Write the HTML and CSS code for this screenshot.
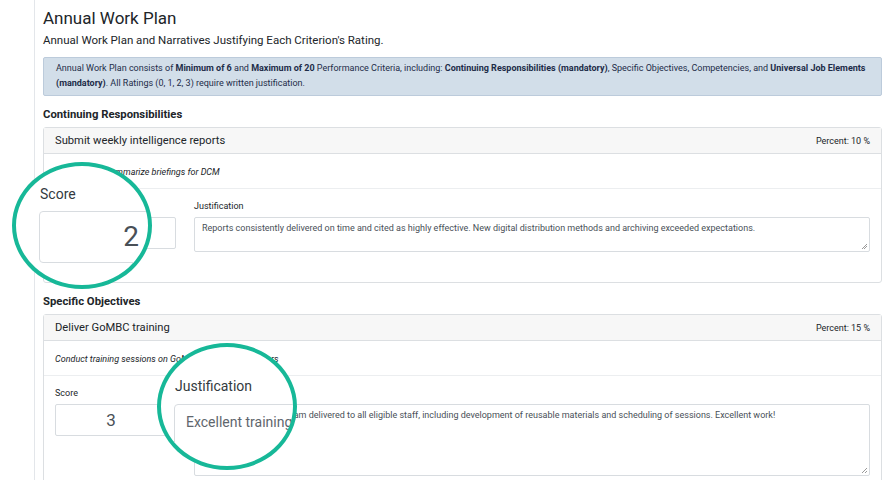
FILE: index.html
```html
<!DOCTYPE html>
<html lang="en">
<head>
    <meta charset="UTF-8">
    <meta name="viewport" content="width=device-width, initial-scale=1.0">
    <title>Annual Work Plan</title>
    <link rel="stylesheet" href="styles.css">
</head>
<body>
    <div class="page">
        <aside class="side"></aside>

        <main class="content">
            <h1 class="title">Annual Work Plan</h1>
            <p class="lead">Annual Work Plan and Narratives Justifying Each Criterion's Rating.</p>

            <div class="alert">
                Annual Work Plan consists of <b>Minimum of 6</b> and <b>Maximum of 20</b> Performance Criteria, including: <b>Continuing Responsibilities (mandatory)</b>, Specific Objectives, Competencies, and <b>Universal Job Elements (mandatory)</b>. All Ratings (0, 1, 2, 3) require written justification.
            </div>

            <h2 class="section">Continuing Responsibilities</h2>
            <div class="card">
                <div class="card-header">
                    <span class="card-title">Submit weekly intelligence reports</span>
                    <span class="percent">Percent: 10 %</span>
                </div>
                <div class="card-desc">Compile and summarize briefings for DCM</div>
                <div class="card-body">
                    <div class="score-col">
                        <label class="field-label">Score</label>
                        <div class="score-box">2</div>
                    </div>
                    <div class="just-col">
                        <label class="field-label">Justification</label>
                        <div class="textarea">Reports consistently delivered on time and cited as highly effective. New digital distribution methods and archiving exceeded expectations.</div>
                    </div>
                </div>
            </div>

            <h2 class="section">Specific Objectives</h2>
            <div class="card">
                <div class="card-header">
                    <span class="card-title">Deliver GoMBC training</span>
                    <span class="percent">Percent: 15 %</span>
                </div>
                <div class="card-desc">Conduct training sessions on GoMBC for new supervisors</div>
                <div class="card-body">
                    <div class="score-col">
                        <label class="field-label">Score</label>
                        <div class="score-box">3</div>
                    </div>
                    <div class="just-col">
                        <label class="field-label">Justification</label>
                        <div class="textarea tall">Excellent training program delivered to all eligible staff, including development of reusable materials and scheduling of sessions. Excellent work!</div>
                    </div>
                </div>
            </div>
        </main>

        <!-- magnifier callouts -->
        <div class="lens lens-score">
            <div class="lens-label">Score</div>
            <div class="lens-box lens-num">2</div>
        </div>
        <div class="lens lens-just">
            <div class="lens-label">Justification</div>
            <div class="lens-box lens-text">Excellent training</div>
        </div>
    </div>
</body>
</html>
```

FILE: styles.css
```css
body {
    margin: 0;
    background-color: #ffffff;
    color: #212529;
    font-family: Roboto, "Liberation Sans", sans-serif;
}
.page {
    position: relative;
    display: flex;
    height: 480px;
    overflow: hidden;
}
.side {
    width: 34px;
    flex-shrink: 0;
    border-right: 1px solid #e3e6ea;
}
.content {
    flex: 1;
    padding: 0 6px 0 8px;
}
.title {
    margin: 8px 0 0;
    font-size: 17px;
    line-height: 20px;
    font-weight: 400;
}
.lead {
    margin: 5px 0 0;
    font-size: 11.5px;
    line-height: 14px;
}
.alert {
    margin-top: 10px;
    padding: 3px 12px 4px;
    background-color: #d2dee9;
    border: 1px solid #bccbdb;
    border-radius: 2px;
    color: #1d2c48;
    font-size: 9px;
    line-height: 15px;
}
.section {
    margin: 12px 0 5px;
    font-size: 11.3px;
    line-height: 14px;
    font-weight: 700;
}
.card {
    border: 1px solid #dcdfe2;
    border-radius: 3px;
}
.card-header {
    display: flex;
    justify-content: space-between;
    align-items: center;
    height: 25px;
    padding: 0 11px;
    background-color: #f7f7f7;
    border-bottom: 1px solid #dcdfe2;
}
.card-title {
    font-size: 11.2px;
}
.percent {
    font-size: 9px;
}
.card-desc {
    padding: 12px 11px 10px;
    font-size: 9px;
    line-height: 12px;
    font-style: italic;
    border-bottom: 1px solid #eceef0;
}
.card-body {
    display: flex;
    gap: 18px;
    padding: 12px 11px 30px;
}
.score-col {
    width: 121px;
    flex-shrink: 0;
}
.just-col {
    flex: 1;
}
.field-label {
    display: block;
    margin-bottom: 6px;
    font-size: 9px;
    line-height: 10px;
}
.score-box {
    height: 30px;
    padding-right: 9px;
    border: 1px solid #d8dce0;
    border-radius: 2px;
    text-align: center;
    font-size: 17px;
    line-height: 30px;
    color: #495057;
}
.textarea {
    position: relative;
    height: 33px;
    padding: 0 7px;
    border: 1px solid #d8dce0;
    border-radius: 2px;
    font-size: 9px;
    line-height: 20px;
    color: #495057;
    box-sizing: content-box;
}
.textarea.tall {
    height: 70px;
}
.textarea::after {
    content: "";
    position: absolute;
    right: 2px;
    bottom: 2px;
    width: 5px;
    height: 5px;
    background: linear-gradient(135deg, transparent 45%, #9a9a9a 45%, #9a9a9a 55%, transparent 55%, transparent 70%, #9a9a9a 70%, #9a9a9a 80%, transparent 80%);
}
.lens {
    position: absolute;
    width: 132px;
    height: 119px;
    border: 4px solid #17b898;
    border-radius: 50%;
    background-color: #ffffff;
    overflow: hidden;
}
.lens-score {
    left: 12px;
    top: 162px;
}
.lens-just {
    left: 157px;
    top: 343px;
}
.lens-label {
    position: absolute;
    font-size: 14px;
    line-height: 16px;
    color: #333a40;
}
.lens-box {
    position: absolute;
    border: 1px solid #d8dce0;
    border-radius: 4px;
    color: #495057;
}
.lens-score .lens-label {
    left: 24px;
    top: 20px;
}
.lens-score .lens-box {
    left: 23px;
    top: 45px;
    width: 182px;
    height: 50px;
}
.lens-num {
    text-align: center;
    font-size: 28px;
    line-height: 50px;
}
.lens-just .lens-label {
    left: 14px;
    top: 31px;
}
.lens-just .lens-box {
    left: 13px;
    top: 57px;
    width: 300px;
    height: 120px;
}
.lens-text {
    padding-left: 11px;
    font-size: 14px;
    line-height: 34px;
    color: #5f666d;
    white-space: nowrap;
}
```
